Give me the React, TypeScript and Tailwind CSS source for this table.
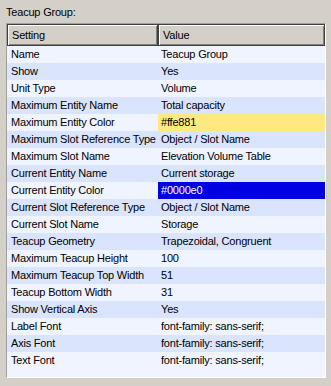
import React from 'react';

type Row = { setting: string; value: string; highlight?: 'yellow' | 'blue' };

const rows: Row[] = [
  { setting: 'Name', value: 'Teacup Group' },
  { setting: 'Show', value: 'Yes' },
  { setting: 'Unit Type', value: 'Volume' },
  { setting: 'Maximum Entity Name', value: 'Total capacity' },
  { setting: 'Maximum Entity Color', value: '#ffe881', highlight: 'yellow' },
  { setting: 'Maximum Slot Reference Type', value: 'Object / Slot Name' },
  { setting: 'Maximum Slot Name', value: 'Elevation Volume Table' },
  { setting: 'Current Entity Name', value: 'Current storage' },
  { setting: 'Current Entity Color', value: '#0000e0', highlight: 'blue' },
  { setting: 'Current Slot Reference Type', value: 'Object / Slot Name' },
  { setting: 'Current Slot Name', value: 'Storage' },
  { setting: 'Teacup Geometry', value: 'Trapezoidal, Congruent' },
  { setting: 'Maximum Teacup Height', value: '100' },
  { setting: 'Maximum Teacup Top Width', value: '51' },
  { setting: 'Teacup Bottom Width', value: '31' },
  { setting: 'Show Vertical Axis', value: 'Yes' },
  { setting: 'Label Font', value: 'font-family: sans-serif;' },
  { setting: 'Axis Font', value: 'font-family: sans-serif;' },
  { setting: 'Text Font', value: 'font-family: sans-serif;' },
];

const headerCell =
  'h-[22px] flex items-center pl-[4px] bg-[#d4d0c8] border border-[#404040] shadow-[inset_1px_1px_0_#ffffff,inset_-1px_-1px_0_#808080]';

export default function App() {
  return (
    <div className="w-[331px] h-[386px] bg-[#d4d0c8] text-[11px] tracking-[-0.2px] text-black font-['Liberation_Sans',Arial,sans-serif] pt-[5px] overflow-hidden">
      <div className="pl-[6px] h-[14px] leading-[14px] mb-[4px]">Teacup Group:</div>
      <div className="ml-[6px] w-[320px] h-[355px] border-t border-l border-[#a0a0a0] border-r-white border-b-white border-r border-b bg-[#f0f4ff] flex flex-col">
        <div className="grid grid-cols-[151px_167px] leading-[14px]">
          <div className={headerCell}>Setting</div>
          <div className={headerCell}>Value</div>
        </div>
        {rows.map((r, i) => {
          const bg = i % 2 === 0 ? 'bg-[#f0f4ff]' : 'bg-[#dbe4fd]';
          const valueBg =
            r.highlight === 'yellow'
              ? 'bg-[#ffe881]'
              : r.highlight === 'blue'
              ? 'bg-[#0000e0] text-white'
              : '';
          return (
            <div key={r.setting} className={`grid grid-cols-[151px_167px] h-[17px] leading-[16px] ${bg}`}>
              <div className="pl-[4px] whitespace-nowrap overflow-hidden">{r.setting}</div>
              <div className={`pl-[3px] whitespace-nowrap overflow-hidden ${valueBg}`}>{r.value}</div>
            </div>
          );
        })}
      </div>
    </div>
  );
}
